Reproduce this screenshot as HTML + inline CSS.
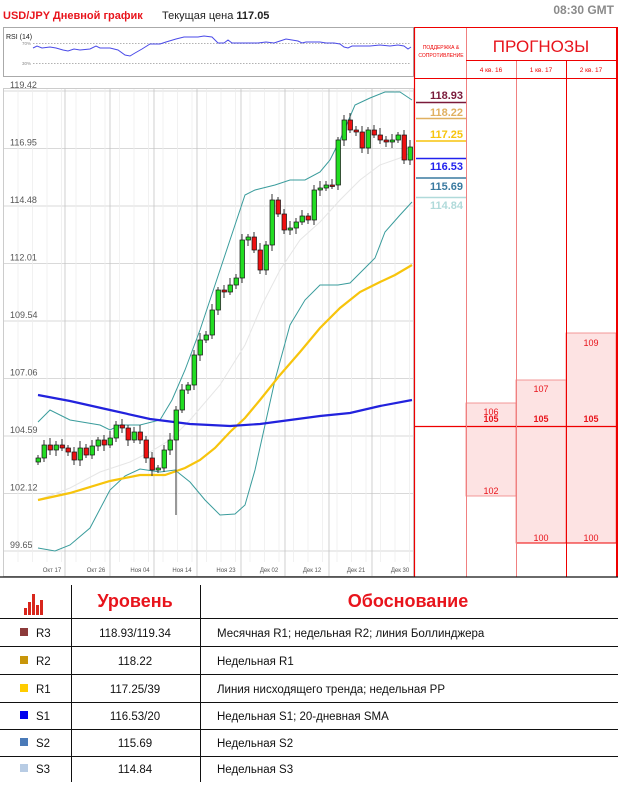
<!DOCTYPE html>
<html><head><meta charset="utf-8">
<style>
body{margin:0;width:622px;height:793px;background:#fff;font-family:"Liberation Sans","DejaVu Sans",sans-serif;overflow:hidden;position:relative}
.a{position:absolute;white-space:nowrap}
</style></head><body>
<div class="a" style="left:3px;top:10px;font-size:11px;font-weight:bold;color:#e8141c">USD/JPY Дневной график</div>
<div class="a" style="left:162px;top:10px;font-size:11px;color:#222">Текущая цена <b>117.05</b></div>
<div class="a" style="right:8px;top:3px;font-size:12px;font-weight:bold;color:#8a8a8a">08:30 GMT</div>

<svg class="a" style="left:0;top:0" width="622" height="793" xmlns="http://www.w3.org/2000/svg" font-family="Liberation Sans, sans-serif">
<rect x="3.5" y="27.5" width="410" height="49" fill="#fff" stroke="#aaa"/>
<text x="6" y="39" font-size="7" fill="#222">RSI (14)</text>
<text x="22" y="45" font-size="4.5" fill="#888">70%</text>
<text x="22" y="65" font-size="4.5" fill="#888">30%</text>
<line x1="33" y1="43.5" x2="410" y2="43.5" stroke="#999" stroke-dasharray="1.5,1.5" stroke-width="0.7"/>
<line x1="33" y1="63.5" x2="410" y2="63.5" stroke="#999" stroke-dasharray="1.5,1.5" stroke-width="0.7"/>
<polyline fill="none" stroke="#4a4ae8" stroke-width="1" points="33,48 37,46 42,48 50,47 56,48 63,50 68,51 74,49 80,50 90,49 96,46 100,48 110,48 118,50 125,55 130,56 135,53 142,49 150,44 160,44 166,42 176,39 184,37 192,37 198,37 204,36 212,37 218,43 224,43 228,40 232,43 240,43 250,43 258,43 266,42 274,43 280,41 286,39 292,40 298,41 302,43 306,42 312,42 320,42 326,43 334,43 340,44 344,47 348,48 352,46 360,46 370,46 380,45 390,46 398,45 404,46 408,49 411,47"/>
<rect x="3.5" y="88.5" width="410" height="488" fill="#fff" stroke="#ccc"/>
<g id="grid" stroke="#ccc" stroke-width="0.8"></g>
<g id="ylab" font-size="9" fill="#555"></g>
<g id="xlab" font-size="6" fill="#555"></g>
<polyline fill="none" stroke="#e6e6e6" stroke-width="1" points="38,500 70,488 100,472 130,462 150,452 170,440 190,420 220,385 245,345 262,305 280,270 300,240 320,222 340,200 360,180 380,165 400,158 412,152"/>
<polyline fill="none" stroke="#3a9c9c" stroke-width="1" points="38,422 50,410 70,420 100,425 110,430 120,425 140,425 160,420 172,400 185,370 200,330 215,285 230,240 245,195 255,190 275,185 290,180 305,180 320,172 330,160 340,140 355,105 370,98 385,92 400,92 412,100"/>
<polyline fill="none" stroke="#3a9c9c" stroke-width="1" points="38,548 55,551 70,545 90,528 110,490 125,476 140,469 160,472 175,470 190,482 205,500 220,515 235,514 245,505 255,470 265,425 275,380 290,325 305,300 320,285 338,285 350,283 365,268 375,258 385,232 400,215 412,202"/>
<polyline fill="none" stroke="#f7c40c" stroke-width="2.2" points="38,500 70,493 110,481 140,475 165,475 185,468 200,460 215,448 230,432 245,418 260,400 280,375 300,352 320,328 340,308 360,292 380,282 395,275 412,265"/>
<polyline fill="none" stroke="#2222dd" stroke-width="2.2" points="38,395 70,401 110,410 150,419 190,424 230,426 260,424 290,420 320,416 350,413 380,406 412,400"/>
<g id="candles"></g>
<rect x="466" y="403" width="50" height="93" fill="#fde3e3" stroke="#f08080" stroke-width="0.8"/>
<rect x="516" y="380" width="50" height="163" fill="#fde3e3" stroke="#f08080" stroke-width="0.8"/>
<rect x="566" y="333" width="50" height="210" fill="#fde3e3" stroke="#f08080" stroke-width="0.8"/>
<line x1="516" y1="543" x2="616" y2="543" stroke="#e00" stroke-width="1"/>
<line x1="414" y1="426.5" x2="616" y2="426.5" stroke="#e00" stroke-width="1.2"/>
<line x1="414.5" y1="27" x2="414.5" y2="577" stroke="#e00" stroke-width="1.2"/>
<line x1="466.5" y1="27" x2="466.5" y2="577" stroke="#f08080" stroke-width="1"/>
<line x1="516.5" y1="60" x2="516.5" y2="577" stroke="#f08080" stroke-width="1"/>
<line x1="566.5" y1="60" x2="566.5" y2="577" stroke="#e00" stroke-width="1"/>
<line x1="617" y1="27" x2="617" y2="577" stroke="#e00" stroke-width="2"/>
<line x1="414" y1="27.5" x2="617" y2="27.5" stroke="#e00" stroke-width="1"/>
<line x1="466" y1="60.5" x2="617" y2="60.5" stroke="#e00" stroke-width="1"/>
<line x1="414" y1="78.5" x2="617" y2="78.5" stroke="#e00" stroke-width="1"/>
<text x="441" y="49" font-size="5" fill="#e00" text-anchor="middle">ПОДДЕРЖКА &amp;</text>
<text x="441" y="57" font-size="5" fill="#e00" text-anchor="middle">СОПРОТИВЛЕНИЕ</text>
<text x="541" y="52" font-size="17" fill="#e8141c" text-anchor="middle">ПРОГНОЗЫ</text>
<text x="491" y="72" font-size="6.5" fill="#e00" text-anchor="middle">4 кв. 16</text>
<text x="541" y="72" font-size="6.5" fill="#e00" text-anchor="middle">1 кв. 17</text>
<text x="591" y="72" font-size="6.5" fill="#e00" text-anchor="middle">2 кв. 17</text>
<g font-size="11" font-weight="bold" text-anchor="end">
<text x="463" y="99" fill="#7a1a3a">118.93</text><line x1="416" y1="102.5" x2="466" y2="102.5" stroke="#7a1a3a" stroke-width="1.5"/>
<text x="463" y="116" fill="#e0b060">118.22</text><line x1="416" y1="118.5" x2="466" y2="118.5" stroke="#e0b060" stroke-width="1.5"/>
<text x="463" y="138" fill="#f7c40c">117.25</text><line x1="416" y1="141" x2="466" y2="141" stroke="#f7c40c" stroke-width="1.5"/>
<line x1="416" y1="158.5" x2="466" y2="158.5" stroke="#2222ee" stroke-width="1.5"/><text x="463" y="170" fill="#2222ee">116.53</text>
<line x1="416" y1="178" x2="466" y2="178" stroke="#3a7aa0" stroke-width="1.5"/><text x="463" y="190" fill="#3a7aa0">115.69</text>
<line x1="416" y1="197.5" x2="466" y2="197.5" stroke="#b0dada" stroke-width="1.5"/><text x="463" y="209" fill="#b0dada">114.84</text>
</g>
<g font-size="9" fill="#e8141c" text-anchor="middle">
<text x="491" y="415">106</text><text x="491" y="422" font-weight="bold">105</text>
<text x="541" y="422" font-weight="bold">105</text><text x="591" y="422" font-weight="bold">105</text>
<text x="491" y="494">102</text><text x="541" y="392">107</text><text x="591" y="346">109</text>
<text x="541" y="541">100</text><text x="591" y="541">100</text>
</g>
<line x1="0" y1="577" x2="618" y2="577" stroke="#111" stroke-width="1.2"/>
<g stroke="#111" stroke-width="1">
<line x1="71.5" y1="585" x2="71.5" y2="782"/><line x1="200.5" y1="585" x2="200.5" y2="782"/>
<line x1="0" y1="618.5" x2="618" y2="618.5"/><line x1="0" y1="646.5" x2="618" y2="646.5"/>
<line x1="0" y1="674.5" x2="618" y2="674.5"/><line x1="0" y1="702.5" x2="618" y2="702.5"/>
<line x1="0" y1="729.5" x2="618" y2="729.5"/><line x1="0" y1="756.5" x2="618" y2="756.5"/>
</g>
<g fill="#d8261c"><rect x="24" y="608" width="3" height="7"/><rect x="28" y="602" width="3" height="13"/><rect x="32" y="594" width="3" height="21"/><rect x="36" y="605" width="3" height="10"/><rect x="40" y="600" width="3" height="15"/></g>
<text x="135" y="607" font-size="18" font-weight="bold" fill="#e8141c" text-anchor="middle">Уровень</text>
<text x="408" y="607" font-size="18" font-weight="bold" fill="#e8141c" text-anchor="middle">Обоснование</text>
<g font-size="11.5" fill="#111">
<rect x="20" y="628" width="8" height="8" fill="#8c3a3a"/><text x="36" y="637">R3</text><text x="135" y="637" text-anchor="middle">118.93/119.34</text><text x="217" y="637">Месячная R1; недельная R2; линия Боллинджера</text>
<rect x="20" y="656" width="8" height="8" fill="#c8960a"/><text x="36" y="665">R2</text><text x="135" y="665" text-anchor="middle">118.22</text><text x="217" y="665">Недельная R1</text>
<rect x="20" y="684" width="8" height="8" fill="#ffcc00"/><text x="36" y="693">R1</text><text x="135" y="693" text-anchor="middle">117.25/39</text><text x="217" y="693">Линия нисходящего тренда; недельная PP</text>
<rect x="20" y="711" width="8" height="8" fill="#0000ee"/><text x="36" y="720">S1</text><text x="135" y="720" text-anchor="middle">116.53/20</text><text x="217" y="720">Недельная S1; 20-дневная SMA</text>
<rect x="20" y="738" width="8" height="8" fill="#4a7ab8"/><text x="36" y="747">S2</text><text x="135" y="747" text-anchor="middle">115.69</text><text x="217" y="747">Недельная S2</text>
<rect x="20" y="764" width="8" height="8" fill="#b8cce4"/><text x="36" y="773">S3</text><text x="135" y="773" text-anchor="middle">114.84</text><text x="217" y="773">Недельная S3</text>
</g>
</svg>
<script>
(function(){
var NS="http://www.w3.org/2000/svg";
function el(p,t,a,txt){var e=document.createElementNS(NS,t);for(var k in a)e.setAttribute(k,a[k]);if(txt)e.textContent=txt;document.getElementById(p).appendChild(e);}
var ys=[91,148.5,206,263.5,321,378.5,436,493.5,551],lb=["119.42","116.95","114.48","112.01","109.54","107.06","104.59","102.12","99.65"];
var i;
for(i=0;i<ys.length;i++){el("grid","line",{x1:4,x2:413,y1:ys[i],y2:ys[i]});el("ylab","text",{x:10,y:ys[i]-3},lb[i]);}
for(var gx=18;gx<413;gx+=14.5)el("grid","line",{x1:gx,x2:gx,y1:89,y2:562,stroke:"#eee"});
[65,110,154,197,241,285,329,372].forEach(function(vx){el("grid","line",{x1:vx,x2:vx,y1:89,y2:577,stroke:"#c4c4c4"});});
var dl=["Окт 17","Окт 26","Ноя 04","Ноя 14","Ноя 23","Дек 02","Дек 12","Дек 21","Дек 30"],dx=[52,96,140,182,226,269,312,356,400];
for(i=0;i<9;i++)el("xlab","text",{x:dx[i],y:572,"text-anchor":"middle"},dl[i]);
var c=[458,445,450,445,448,452,460,448,455,446,440,445,438,425,428,440,432,440,458,470,468,450,440,410,390,385,355,340,335,310,290,292,285,278,240,237,250,270,245,200,214,230,228,222,216,220,190,188,185,185,140,120,130,132,148,130,135,140,142,140,135,160,147];
var prev=462;
for(i=0;i<c.length;i++){var cx=38+6*i,o=prev,cl=c[i],t0=Math.min(o,cl),b0=Math.max(o,cl),h=Math.max(b0-t0,1.5);
var wt=t0-3-(i*7%5),wb=b0+3+(i*5%4);if(i==23)wb=515;
el("candles","line",{x1:cx,x2:cx,y1:wt,y2:wb,stroke:"#333","stroke-width":1});
el("candles","rect",{x:cx-2,y:t0,width:4.5,height:h,fill:cl<o?"#22dd22":"#ee1111",stroke:"#111","stroke-width":0.7});
prev=cl;}
})();
</script>
</body></html>
